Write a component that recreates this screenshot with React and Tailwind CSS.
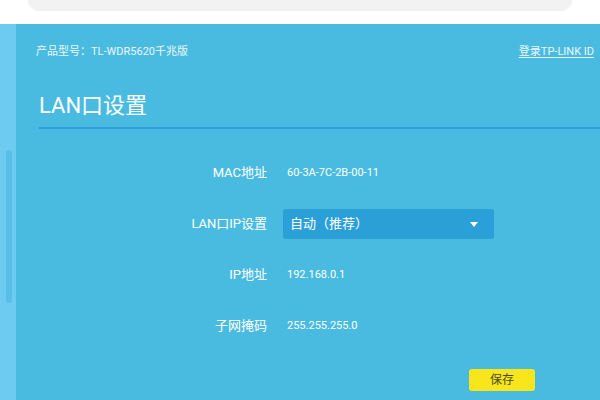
export default function App() {
  const font = { fontFamily: "Roboto, 'Noto Sans CJK SC', sans-serif" };
  return (
    <div
      className="w-[600px] h-[400px] overflow-hidden flex flex-col bg-white"
      style={font}
    >
      {/* Browser bar */}
      <div className="h-[24px] shrink-0 bg-white px-[28px]">
        <div className="h-[11px] bg-[#f2f2f2] rounded-b-[12px]"></div>
      </div>

      <div className="flex flex-1 shadow-[inset_0_1px_2px_rgba(0,0,0,0.12)]">
        {/* Left strip with scrollbar */}
        <div className="w-[16px] shrink-0 bg-[#6ccbee] pt-[126px] pl-[6px]">
          <div className="w-[6px] h-[153px] rounded-full bg-[#58bfe6]"></div>
        </div>

        {/* Main */}
        <div className="flex-1 bg-[#4abbe0] flex flex-col">
          <div className="flex items-center justify-between pl-[20px] pr-[6px] pt-[21px] h-[36px] text-[11px] text-[#eaf7fc]">
            <span>产品型号：TL-WDR5620千兆版</span>
            <span className="underline underline-offset-2">登录TP-LINK ID</span>
          </div>

          <div className="pl-[23px] pt-[31px]">
            <h1 className="text-[22px] leading-[30px] text-white">LAN口设置</h1>
            <div className="mt-[6px] h-[2px] bg-[#2d9fd7]"></div>
          </div>

          {/* Form */}
          <div className="flex flex-col mt-[29px]">
            <div className="flex items-center h-[30px]">
              <div className="w-[251px] text-right text-[13px] text-white">MAC地址</div>
              <div className="pl-[20px] text-[11px] text-white">60-3A-7C-2B-00-11</div>
            </div>
            <div className="flex items-center h-[30px] mt-[21px]">
              <div className="w-[251px] text-right text-[13px] text-white">LAN口IP设置</div>
              <div className="ml-[16px] w-[211px] h-[30px] rounded-[3px] bg-[#2b9fd8] flex items-center justify-between pl-[7px] pr-[16px]">
                <span className="text-[13px] text-white">自动（推荐）</span>
                <svg width="8" height="5" viewBox="0 0 8 5">
                  <path d="M0 0 L8 0 L4 5 Z" fill="#ffffff" />
                </svg>
              </div>
            </div>
            <div className="flex items-center h-[30px] mt-[21px]">
              <div className="w-[251px] text-right text-[13px] text-white">IP地址</div>
              <div className="pl-[20px] text-[11px] text-white">192.168.0.1</div>
            </div>
            <div className="flex items-center h-[30px] mt-[21px]">
              <div className="w-[251px] text-right text-[13px] text-white">子网掩码</div>
              <div className="pl-[20px] text-[11px] text-white">255.255.255.0</div>
            </div>
            <div className="flex mt-[28px] pl-[453px]">
              <button className="w-[66px] h-[22px] rounded-[3px] bg-[#f8e51c] text-[12px] text-[#4a4a2a]">
                保存
              </button>
            </div>
          </div>
        </div>
      </div>
    </div>
  );
}
